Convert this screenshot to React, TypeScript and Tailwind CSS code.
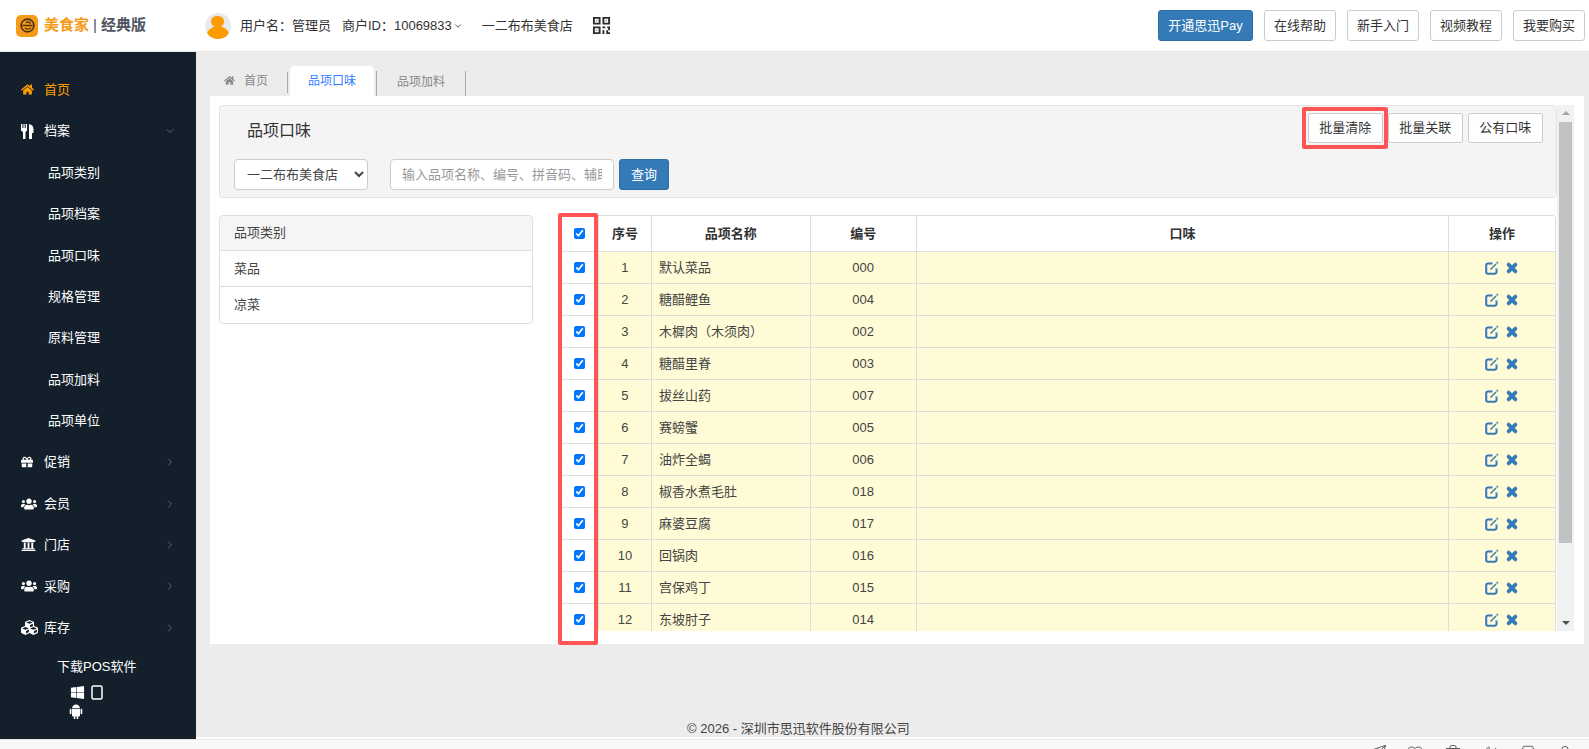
import { ChevronDown, ChevronRight, Send, Heart, Trash2, Volume2, Bookmark, User } from 'lucide-react';
import { FaHome, FaGift, FaUsers, FaUniversity, FaCubes, FaWindows, FaTimes } from 'react-icons/fa';
import type { ReactNode } from 'react';

const font = 'font-["Liberation_Sans","Noto_Sans_CJK_SC",sans-serif]';

function Cutlery() {
  return (
    <svg viewBox="0 0 13 15" className="w-[13px] h-[15px]" fill="currentColor">
      <path d="M0 0h1.400v4h1V0h1.300v4h1V0h1.400v6.500L4.500 8v7H2V8L0 6.500z" />
      <path d="M8 0c3 .5 4.500 2.500 4.500 5.500V9H11v6H8z" />
    </svg>
  );
}

function Android() {
  return (
    <svg viewBox="0 0 14 16" className="w-[14px] h-[16px]" fill="currentColor">
      <path d="M3 5.200C3.200 3 5 1.500 7 1.500s3.800 1.500 4 3.700z" />
      <path d="M3 5.900h8v6.600a1 1 0 0 1-1 1H9.200V16H7.700v-2.500H6.300V16H4.800v-2.500H4a1 1 0 0 1-1-1z" />
      <rect x="0.700" y="5.800" width="1.700" height="5.400" rx="0.850" />
      <rect x="11.600" y="5.800" width="1.700" height="5.400" rx="0.850" />
    </svg>
  );
}

function EditIcon() {
  return (
    <svg viewBox="0 0 14 14" className="w-[14px] h-[14px]" fill="none" stroke="#337ab7">
      <path d="M7.500 2.500H3A1.800 1.800 0 0 0 1.200 4.300V11A1.800 1.800 0 0 0 3 12.800h6.700A1.800 1.800 0 0 0 11.500 11V7.500" strokeWidth="2" />
      <path d="M5.500 8.500 11 3" strokeWidth="1.500" />
      <path d="M12 .8l1.200 1.200-.8.800-1.200-1.200z" fill="#337ab7" strokeWidth="0.500" />
    </svg>
  );
}

function Logo() {
  return (
    <div className="w-[22px] h-[22px] rounded-[5px] bg-[#f79a17] flex items-center justify-center">
      <svg viewBox="0 0 20 20" className="w-[17px] h-[17px]" fill="none" stroke="#4a3416" strokeWidth="2">
        <circle cx="10" cy="10" r="7.500" />
        <path d="M4 10h12M8 6.500c3-1.500 5 0 5.500 1.500M7 13c2 1.500 5 1.500 7-.5" strokeWidth="1.600" />
      </svg>
    </div>
  );
}

function Avatar() {
  return (
    <div className="w-[26px] h-[26px] rounded-full bg-[#e8e9ee] overflow-hidden flex flex-col items-center pt-[3px]">
      <div className="w-[13px] h-[13px] rounded-full bg-[#fd9c00]" />
      <div className="w-[24px] h-[14px] -mt-[1px] rounded-t-full bg-[#fd9c00]" />
    </div>
  );
}

function QrCode() {
  return (
    <svg viewBox="0 0 20 20" className="w-[19px] h-[19px]" fill="#2c2c2c">
      <path fillRule="evenodd" d="M1 1h8v8H1zM3 3v4h4V3zM11 1h8v8h-8zM13 3v4h4V3zM1 11h8v8H1zM3 13v4h4v-4z" />
      <path d="M4.500 4.500h1v1h-1zM14.500 4.500h1v1h-1zM4.500 14.500h1v1h-1zM11 11h3v2h-3zM16 11h3v4h-2v-2h-1zM11 15h2v4h-2zM15 15h2v2h2v2h-4z" />
    </svg>
  );
}

const menuTop: { icon: ReactNode; label: string; active?: boolean; open?: boolean }[] = [
  { icon: <FaHome className="text-[13px]" />, label: '首页', active: true },
  { icon: <Cutlery />, label: '档案', open: true },
];

const subMenu = ['品项类别', '品项档案', '品项口味', '规格管理', '原料管理', '品项加料', '品项单位'];

const menuBottom: { icon: ReactNode; label: string }[] = [
  { icon: <FaGift className="text-[12px]" />, label: '促销' },
  { icon: <FaUsers className="text-[16px]" />, label: '会员' },
  { icon: <FaUniversity className="text-[15px]" />, label: '门店' },
  { icon: <FaUsers className="text-[16px]" />, label: '采购' },
  { icon: <FaCubes className="text-[17px]" />, label: '库存' },
];

const rows = [
  ['1', '默认菜品', '000'],
  ['2', '糖醋鲤鱼', '004'],
  ['3', '木樨肉（木须肉）', '002'],
  ['4', '糖醋里脊', '003'],
  ['5', '拔丝山药', '007'],
  ['6', '赛螃蟹', '005'],
  ['7', '油炸全蝎', '006'],
  ['8', '椒香水煮毛肚', '018'],
  ['9', '麻婆豆腐', '017'],
  ['10', '回锅肉', '016'],
  ['11', '宫保鸡丁', '015'],
  ['12', '东坡肘子', '014'],
];

function MenuItem({ icon, label, active, arrow }: { icon: ReactNode; label: string; active?: boolean; arrow?: 'right' | 'down' }) {
  return (
    <div className={`h-[41.4px] flex items-center pl-[21px] pr-[20px] text-[13px] ${active ? 'text-[#ff9c00]' : 'text-white'}`}>
      <span className="w-[23px] flex items-center">{icon}</span>
      <span className="flex-1">{label}</span>
      {arrow === 'right' && <ChevronRight size={12} className="text-[#5a6670]" />}
      {arrow === 'down' && <ChevronDown size={12} className="text-[#5a6670]" />}
    </div>
  );
}

function Sidebar() {
  return (
    <aside className="w-[196px] shrink-0 bg-[#13202c] pt-[17px] text-white">
      {menuTop.map((m) => (
        <MenuItem key={m.label} icon={m.icon} label={m.label} active={m.active} arrow={m.open ? 'down' : undefined} />
      ))}
      {subMenu.map((s) => (
        <div key={s} className="h-[41.4px] flex items-center pl-[48px] text-[13px] text-white">
          {s}
        </div>
      ))}
      {menuBottom.map((m) => (
        <MenuItem key={m.label} icon={m.icon} label={m.label} arrow="right" />
      ))}
      <div className="pl-[57px] mt-[10px] text-[13px] leading-[18px]">下载POS软件</div>
      <div className="pl-[70px] mt-[8px] flex items-center gap-[6px] h-[16px]">
        <FaWindows className="text-[15px]" />
        <svg viewBox="0 0 12 15" className="w-[12px] h-[15px]" fill="none" stroke="currentColor" strokeWidth="1.500">
          <rect x="1" y="1" width="10" height="13" rx="1.500" />
        </svg>
      </div>
      <div className="pl-[69px] mt-[3px]">
        <Android />
      </div>
    </aside>
  );
}

function Header() {
  return (
    <header className="h-[52px] shrink-0 bg-white flex items-center pl-[16px] pr-[4px] text-[13px] text-[#333] border-b border-[#e6e6e6]">
      <Logo />
      <span className="ml-[6px] text-[15px] font-bold text-[#f79a17]">美食家</span>
      <span className="mx-[4px] text-[15px] text-[#4c5560]">|</span>
      <span className="text-[15px] font-bold text-[#4c5560]">经典版</span>
      <div className="ml-[59px]">
        <Avatar />
      </div>
      <span className="ml-[9px]">用户名：管理员</span>
      <span className="ml-[11px]">商户ID：10069833</span>
      <ChevronDown size={10} className="ml-[1px]" />
      <span className="ml-[19px]">一二布布美食店</span>
      <span className="ml-[19px]">
        <QrCode />
      </span>
      <div className="ml-auto flex gap-[11px]">
        <button className="w-[95px] h-[31px] rounded-[3px] bg-[#337ab7] border border-[#2e6da4] text-white text-[13px]">开通思迅Pay</button>
        {['在线帮助', '新手入门', '视频教程', '我要购买'].map((t) => (
          <button key={t} className="w-[72px] h-[31px] rounded-[3px] bg-white border border-[#ccc] text-[#333] text-[13px]">
            {t}
          </button>
        ))}
      </div>
    </header>
  );
}

function Tabs() {
  return (
    <div className="h-[44px] pt-[14px] pl-[28px] flex items-end text-[12px] text-[#888]">
      <FaHome className="text-[11px] mb-[10px] text-[#888]" />
      <span className="ml-[9px] w-[44px] h-[21px] mb-[3px] leading-[19px] border-r border-[#aaa]">首页</span>
      <span className="ml-[2px] w-[84px] h-[30px] bg-white rounded-t-[4px] text-[#2f7dff] text-center leading-[30px]">品项口味</span>
      <span className="ml-[2px] w-[90px] h-[25px] pl-[20px] leading-[22px] border-l border-r border-[#aaa]">品项加料</span>
    </div>
  );
}

const th = 'h-[36px] border-r border-b border-[#ddd] text-center font-bold text-[13px] text-[#333] flex items-center justify-center';
const td = 'h-[32px] border-r border-b border-[#ddd] flex items-center text-[13px] text-[#444]';
const cols = ['w-[37px]', 'w-[53px]', 'w-[159px]', 'w-[106px]', 'w-[533px]', 'w-[107px]'];

function GoodsTable() {
  return (
    <div className="w-[995px] h-[416px] overflow-hidden border-t border-l border-[#ddd] rounded-t-[4px]">
      <div className="flex bg-white">
        <div className={`${th} ${cols[0]}`}>
          <input type="checkbox" checked readOnly className="w-[11px] h-[11px] -mt-[1px]" />
        </div>
        <div className={`${th} ${cols[1]}`}>序号</div>
        <div className={`${th} ${cols[2]}`}>品项名称</div>
        <div className={`${th} ${cols[3]}`}>编号</div>
        <div className={`${th} ${cols[4]}`}>口味</div>
        <div className={`${th} ${cols[5]}`}>操作</div>
      </div>
      {rows.map(([no, name, code]) => (
        <div key={no} className="flex bg-[#fffbd7]">
          <div className={`${td} ${cols[0]} justify-center bg-white`}>
            <input type="checkbox" checked readOnly className="w-[11px] h-[11px]" />
          </div>
          <div className={`${td} ${cols[1]} justify-center`}>{no}</div>
          <div className={`${td} ${cols[2]} pl-[7px]`}>{name}</div>
          <div className={`${td} ${cols[3]} justify-center`}>{code}</div>
          <div className={`${td} ${cols[4]}`} />
          <div className={`${td} ${cols[5]} justify-center gap-[6px]`}>
            <EditIcon />
            <span className="text-[#337ab7]">
              <FaTimes className="text-[14px]" stroke="currentColor" strokeWidth={40} />
            </span>
          </div>
        </div>
      ))}
    </div>
  );
}

function Panel() {
  return (
    <div className="mx-[5px] ml-[14px] h-[548px] bg-white pl-[9px] pr-[10px] pt-[9px] flex">
      <div className="w-[1338px] h-[526px] overflow-hidden">
        <div className="h-[93px] bg-[#f4f4f4] border border-[#e3e3e3] rounded-[4px] relative">
          <div className="pt-[13px] pl-[27px] text-[16px] leading-[24px] text-[#333]">品项口味</div>
          <div className="mt-[16px] pl-[14px] flex items-center">
            <select className="w-[134px] h-[31px] rounded-[4px] bg-white border border-[#ccc] pl-[8px] text-[13px] text-[#444]">
              <option>一二布布美食店</option>
            </select>
            <input
              className="ml-[22px] w-[224px] h-[31px] rounded-[4px] bg-white border border-[#ccc] px-[11px] text-[13px] placeholder:text-[#999]"
              placeholder="输入品项名称、编号、拼音码、辅助码"
            />
            <button className="ml-[5px] w-[50px] h-[31px] rounded-[3px] bg-[#337ab7] border border-[#2e6da4] text-white text-[13px]">查询</button>
          </div>
          <div className="absolute top-[7px] right-[13px] flex gap-[4.500px]">
            {['批量清除', '批量关联', '公有口味'].map((t) => (
              <button key={t} className="w-[75.500px] h-[30px] rounded-[3px] bg-white border border-[#ccc] text-[#333] text-[13px]">
                {t}
              </button>
            ))}
          </div>
        </div>
        <div className="mt-[17px] flex">
          <div className="w-[314px] h-[109px] border border-[#ddd] rounded-[4px] text-[13px] text-[#444] overflow-hidden">
            <div className="h-[35px] bg-[#f5f5f5] border-b border-[#ddd] pl-[14px] flex items-center">品项类别</div>
            <div className="h-[36px] border-b border-[#ddd] pl-[14px] flex items-center">菜品</div>
            <div className="h-[35px] pl-[14px] flex items-center">凉菜</div>
          </div>
          <div className="ml-[28px]">
            <GoodsTable />
          </div>
        </div>
      </div>
      <div className="ml-[0px] w-[17px] h-[526px] bg-[#f1f1f1] relative">
        <div className="flex justify-center pt-[6px]">
          <div className="w-0 h-0 border-x-[4px] border-x-transparent border-b-[4px] border-b-[#a3a3a3]" />
        </div>
        <div className="mt-[7px] mx-[2px] h-[421px] bg-[#c1c1c1]" />
        <div className="absolute bottom-[6px] left-0 right-0 flex justify-center">
          <div className="w-0 h-0 border-x-[4px] border-x-transparent border-t-[4px] border-t-[#505050]" />
        </div>
      </div>
    </div>
  );
}

export default function App() {
  return (
    <div className={`relative w-[1589px] h-[749px] overflow-hidden flex flex-col bg-white ${font}`}>
      <Header />
      <div className="h-[687px] shrink-0 flex">
        <Sidebar />
        <main className="flex-1 flex flex-col bg-[#ececec]">
          <Tabs />
          <Panel />
          <div className="mt-auto h-[10px] mb-[2px] -translate-y-[1px] pl-[491px] text-[13px] leading-[10px] text-[#444]">© 2026 - 深圳市思迅软件股份有限公司</div>
          <div className="h-[2px] bg-white" />
        </main>
      </div>
      <div className="flex-1 bg-[#f8f8f8] border-t border-[#e8e8e8] flex justify-end pr-[15px] gap-[19.500px] pt-[4px] text-[#555] overflow-hidden">
        <Send size={18} strokeWidth={1.250} />
        <Heart size={18} strokeWidth={1.250} />
        <Trash2 size={18} strokeWidth={1.250} />
        <Volume2 size={18} strokeWidth={1.250} />
        <Bookmark size={18} strokeWidth={1.250} />
        <User size={18} strokeWidth={1.250} />
      </div>
      {/* red marks over the screenshot */}
      <div className="absolute left-[1302px] top-[107px] w-[86px] h-[42px] border-[4px] border-[#ff5555] rounded-[2px]" />
      <div className="absolute left-[558px] top-[213px] w-[40px] h-[432px] border-[4px] border-[#ff5555] rounded-[2px]" />
    </div>
  );
}
